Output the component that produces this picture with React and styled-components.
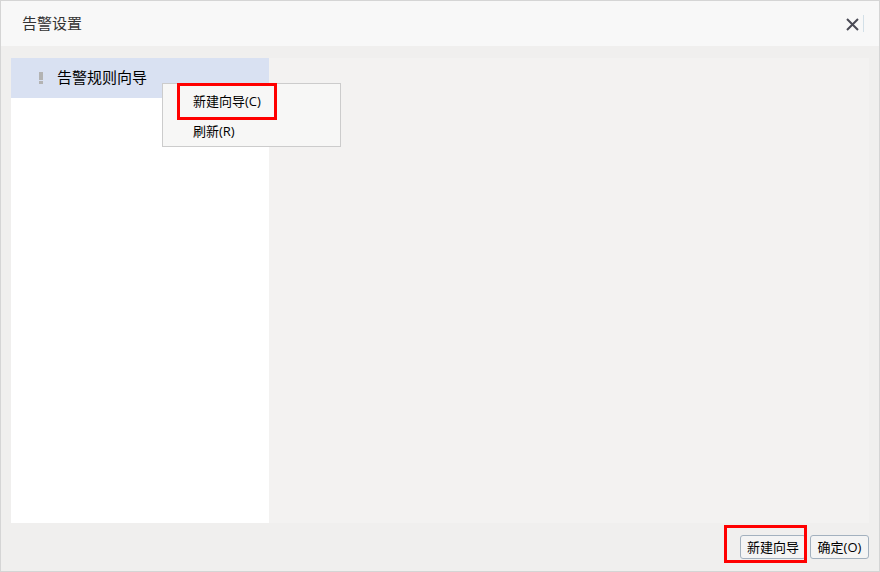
import React from "react";
import styled, { createGlobalStyle } from "styled-components";

const GlobalStyle = createGlobalStyle`
    * {
        box-sizing: border-box;
    }
    body {
        margin: 0;
        font-family: 'Open Sans', 'Noto Sans CJK SC', sans-serif;
        font-size: 13px;
        color: #000;
    }
    button {
        font: inherit;
        color: inherit;
        cursor: pointer;
    }
`

const Dialog = styled.section`
    display: flex;
    flex-direction: column;
    min-height: 100vh;
    border: 1px solid #d5d5d5;
    background: #f0efee;
`
const Header = styled.header`
    display: flex;
    align-items: center;
    justify-content: space-between;
    height: 45px;
    padding: 0 15px 0 21px;
    background: #f8f8f8;
`
const Title = styled.h1`
    margin: 0;
    padding-bottom: 2px;
    font-size: 15px;
    font-weight: 400;
    line-height: 20px;
    color: #333;
`
const CloseButton = styled.button`
    display: flex;
    padding: 2px 3px 0 0;
    border: 0;
    border-right: 1px solid #d3e0e8;
    background: none;
`
const Content = styled.main`
    display: flex;
    flex: 1;
    margin: 12px 10px 0;
`
const Sidebar = styled.nav`
    width: 258px;
    background: #fff;
`
const Detail = styled.div`
    flex: 1;
    background: #f3f2f1;
`
const TreeItem = styled.div`
    position: relative;
    display: flex;
    align-items: center;
    gap: 14px;
    height: 40px;
    padding-left: 28px;
    background: #d9e1f2;
`
const TreeLabel = styled.span`
    padding-bottom: 2px;
    font-size: 15px;
    line-height: 20px;
`
const Menu = styled.div`
    position: absolute;
    top: 25px;
    left: 151px;
    z-index: 1;
    display: flex;
    flex-direction: column;
    width: 179px;
    padding: 2px 0 0;
    border: 1px solid #ccc;
    background: #f7f7f6;
`
const MenuItem = styled.button`
    height: 30px;
    padding: 0 30px;
    border: 0;
    background: none;
    text-align: left;
    line-height: 18px;
`
/* red frame that lies over the part it points at */
const Highlight = styled.span`
    position: absolute;
    top: ${({ $top }) => $top}px;
    left: ${({ $left }) => $left}px;
    width: ${({ $width }) => $width}px;
    height: ${({ $height }) => $height}px;
    border: 3px solid #f00;
    pointer-events: none;
`
const Footer = styled.footer`
    display: flex;
    justify-content: flex-end;
    gap: 4px;
    padding: 12px 10px;
`
const ButtonWrap = styled.div`
    position: relative;
    display: flex;
`
const Button = styled.button`
    height: 24px;
    min-width: ${({ $wide }) => ($wide ? 66 : 59)}px;
    padding: 0 5px;
    border: 1px solid #a3b1bf;
    border-radius: 3px;
    background: #f4f4f4;
    line-height: 18px;
    white-space: nowrap;
`

function App () {
    return (
        <Dialog>
            <GlobalStyle />
            <Header>
                <Title>告警设置</Title>
                <CloseButton aria-label="关闭">
                    <svg width="15" height="15" viewBox="0 0 15 15" fill="none" stroke="#4a4a55" strokeWidth="2">
                        <path d="M2 2L13 13M13 2L2 13" />
                    </svg>
                </CloseButton>
            </Header>
            <Content>
                <Sidebar>
                    <TreeItem>
                        <svg width="4" height="12" viewBox="0 0 4 12" fill="#b3b3b3">
                            <rect width="4" height="8" />
                            <rect y="9" width="4" height="3" />
                        </svg>
                        <TreeLabel>告警规则向导</TreeLabel>
                        <Menu role="menu">
                            <MenuItem role="menuitem">新建向导(C)</MenuItem>
                            <MenuItem role="menuitem">刷新(R)</MenuItem>
                            <Highlight $top={-1} $left={14} $width={100} $height={37} />
                        </Menu>
                    </TreeItem>
                </Sidebar>
                <Detail />
            </Content>
            <Footer>
                <ButtonWrap>
                    <Button $wide>新建向导</Button>
                    <Highlight $top={-10} $left={-16} $width={83} $height={38} />
                </ButtonWrap>
                <Button>确定(O)</Button>
            </Footer>
        </Dialog>
    )
}

export default App;
